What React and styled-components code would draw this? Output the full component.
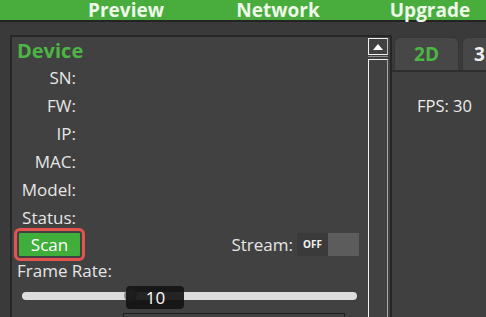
import React from "react";
import styled, { createGlobalStyle } from "styled-components";

const Global = createGlobalStyle`
  html, body { margin: 0; padding: 0; background: #3a3a3a; overflow: hidden; }
  body { font-family: "Open Sans", "Noto Sans", sans-serif; width: 486px; height: 317px; }
`;

const Page = styled.div`
  width: 486px;
  height: 317px;
  display: flex;
  flex-direction: column;
  overflow: hidden;
`;

const Header = styled.div`
  height: 20px;
  background: #48ad3c;
  border-bottom: 2px solid #232323;
  display: flex;
  padding-left: 50px;
  flex-shrink: 0;
`;

const HeaderTab = styled.div`
  width: 152px;
  flex-shrink: 0;
  text-align: center;
  color: #eef8ea;
  font-weight: 700;
  font-size: 19px;
  line-height: 20px;
  height: 20px;
`;

const Body = styled.div`
  flex: 1;
  display: flex;
  padding: 13px 0 0 10px;
  min-height: 0;
`;

const LeftPanel = styled.div`
  width: 378px;
  flex-shrink: 0;
  display: flex;
  border-top: 2px solid #262626;
  border-left: 2px solid #262626;
  border-right: 2px solid #262626;
  background: #414141;
`;

const Content = styled.div`
  width: 356px;
  flex-shrink: 0;
  padding: 2px 0 0 5px;
  box-sizing: border-box;
  display: flex;
  flex-direction: column;
  overflow: hidden;
  & > * { flex-shrink: 0; }
`;

const Title = styled.div`
  color: #4db544;
  font-weight: 700;
  font-size: 20px;
  line-height: 24px;
`;

const Row = styled.div`
  display: flex;
  align-items: center;
  height: 28px;
`;

const Label = styled.div`
  width: 59px;
  text-align: right;
  color: #e6e6e6;
  font-size: 17px;
  white-space: nowrap;
`;

const ActionRow = styled.div`
  display: flex;
  align-items: center;
  justify-content: space-between;
  height: 34px;
  margin-top: -4px;
  padding-right: 9px;
`;

const ScanFrame = styled.div`
  width: 71px;
  height: 33px;
  box-sizing: border-box;
  border: 3px solid #e1544f;
  border-radius: 6px;
  padding: 2px;
  margin-left: -3px;
`;

const ScanButton = styled.div`
  height: 100%;
  background: #3fae3a;
  color: #ffffff;
  font-size: 17px;
  display: flex;
  align-items: center;
  justify-content: center;
  border-radius: 1px;
`;

const StreamGroup = styled.div`
  display: flex;
  align-items: center;
  gap: 4px;
`;

const StreamLabel = styled.div`
  color: #e6e6e6;
  font-size: 17px;
`;

const Toggle = styled.div`
  width: 62px;
  height: 23px;
  display: flex;
`;

const ToggleHalf = styled.div`
  flex: 1;
  background: ${(p) => (p.$on ? "#3a3a3a" : "#5c5c5c")};
  color: #f2f2f2;
  font-size: 10px;
  font-weight: 700;
  display: flex;
  align-items: center;
  padding-left: 6px;
`;

const FrameLabel = styled.div`
  color: #e6e6e6;
  font-size: 17px;
  line-height: 20px;
`;

const SliderWrap = styled.div`
  position: relative;
  height: 24px;
  margin: 3px 0 0 5px;
  width: 335px;
  display: flex;
  align-items: center;
`;

const Track = styled.div`
  width: 100%;
  height: 8px;
  border-radius: 4px;
  background: #dcdcdc;
`;

const Thumb = styled.div`
  position: absolute;
  left: 102px;
  top: 5px;
  width: 13px;
  height: 13px;
  border-radius: 50%;
  background: radial-gradient(circle at 40% 40%, #9a9a9a, #6a6a6a);
`;

const ValueBubble = styled.div`
  position: absolute;
  left: 104px;
  top: 2px;
  width: 58px;
  height: 23px;
  border-radius: 4px;
  background: rgba(20, 20, 20, 0.92);
  color: #ffffff;
  font-size: 17px;
  display: flex;
  align-items: center;
  justify-content: center;
  padding-left: 1px;
  box-sizing: border-box;
`;

const Combo = styled.div`
  margin: 5px 0 0 106px;
  width: 220px;
  height: 20px;
  border: 1px solid #1f1f1f;
  border-bottom: none;
`;

const Scrollbar = styled.div`
  width: 20px;
  flex-shrink: 0;
  display: flex;
  flex-direction: column;
  padding-top: 1px;
`;

const ScrollButton = styled.div`
  height: 17px;
  box-sizing: border-box;
  border: 1px solid #f0f0f0;
  border-right-color: #bdbdbd;
  display: flex;
  align-items: center;
  justify-content: center;
`;

const ScrollGap = styled.div`
  height: 3px;
  border-top: 1px solid #8a8a8a;
  box-sizing: border-box;
  margin-top: 1px;
`;

const ScrollTrack = styled.div`
  flex: 1;
  border-left: 1px solid #f0f0f0;
  border-top: 1px solid #f0f0f0;
  border-right: 1px solid #a8a8a8;
`;

const RightPanel = styled.div`
  flex: 1;
  display: flex;
  flex-direction: column;
  padding-top: 2px;
`;

const TabBar = styled.div`
  display: flex;
  gap: 3px;
  padding-left: 2px;
  height: 33px;
  border-bottom: 2px solid #2e2e2e;
`;

const Tab = styled.div`
  width: 65px;
  flex-shrink: 0;
  background: #474747;
  border: 1px solid #363636;
  border-bottom: none;
  border-radius: 6px 6px 0 0;
  color: ${(p) => (p.$active ? "#4db544" : "#f0f0f0")};
  font-weight: 700;
  font-size: 19px;
  display: flex;
  align-items: center;
  justify-content: ${(p) => (p.$active ? "center" : "flex-start")};
  padding-left: ${(p) => (p.$active ? "0" : "11px")};
  box-sizing: border-box;
`;

const TabBody = styled.div`
  flex: 1;
  background: #404040;
  padding: 22px 0 0 25px;
`;

const Fps = styled.div`
  color: #ececec;
  font-size: 16.5px;
`;

export default function App() {
  const labels = ["SN:", "FW:", "IP:", "MAC:", "Model:", "Status:"];
  return (
    <Page>
      <Global />
      <Header>
        <HeaderTab>Preview</HeaderTab>
        <HeaderTab>Network</HeaderTab>
        <HeaderTab>Upgrade</HeaderTab>
      </Header>
      <Body>
        <LeftPanel>
          <Content>
            <Title>Device</Title>
            {labels.map((l) => (
              <Row key={l}>
                <Label>{l}</Label>
              </Row>
            ))}
            <ActionRow>
              <ScanFrame>
                <ScanButton>Scan</ScanButton>
              </ScanFrame>
              <StreamGroup>
                <StreamLabel>Stream:</StreamLabel>
                <Toggle>
                  <ToggleHalf $on>OFF</ToggleHalf>
                  <ToggleHalf />
                </Toggle>
              </StreamGroup>
            </ActionRow>
            <FrameLabel>Frame Rate:</FrameLabel>
            <SliderWrap>
              <Track />
              <Thumb />
              <ValueBubble>10</ValueBubble>
            </SliderWrap>
            <Combo />
          </Content>
          <Scrollbar>
            <ScrollButton>
              <svg width="10" height="6" viewBox="0 0 10 6">
                <polygon points="5,0 10,6 0,6" fill="#ffffff" />
              </svg>
            </ScrollButton>
            <ScrollGap />
            <ScrollTrack />
          </Scrollbar>
        </LeftPanel>
        <RightPanel>
          <TabBar>
            <Tab $active>2D</Tab>
            <Tab>3D</Tab>
          </TabBar>
          <TabBody>
            <Fps>FPS: 30</Fps>
          </TabBody>
        </RightPanel>
      </Body>
    </Page>
  );
}
